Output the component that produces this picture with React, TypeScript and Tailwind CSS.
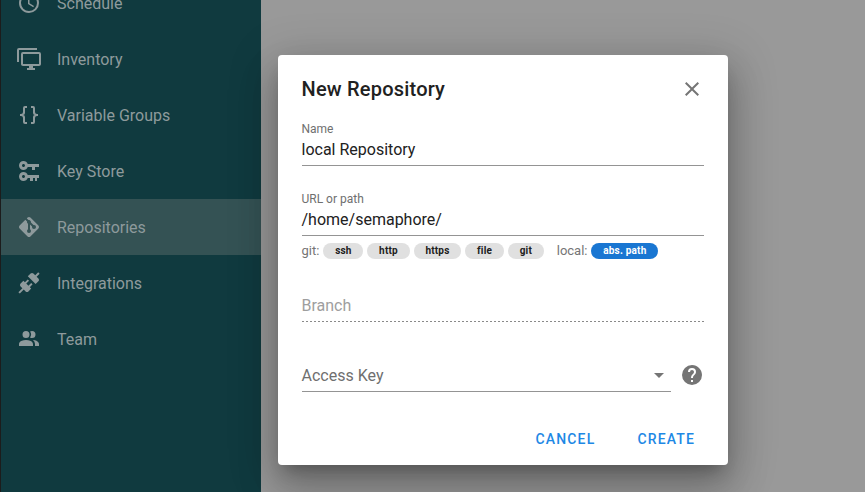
import React from "react";

const icons = {
  clock: "M12,20A8,8 0 0,0 20,12A8,8 0 0,0 12,4A8,8 0 0,0 4,12A8,8 0 0,0 12,20M12,2A10,10 0 0,1 22,12A10,10 0 0,1 12,22C6.47,22 2,17.5 2,12A10,10 0 0,1 12,2M12.5,7V12.25L17,14.92L16.25,16.15L11,13V7H12.5Z",
  monitor: "M22,17V7H6V17H22M22,5A2,2 0 0,1 24,7V17C24,18.11 23.1,19 22,19H16V21H18V23H10V21H12V19H6C4.89,19 4,18.11 4,17V7A2,2 0 0,1 6,5H22M2,3V15H0V3A2,2 0 0,1 2,1H20V3H2Z",
  braces: "M8,3A2,2 0 0,0 6,5V9A2,2 0 0,1 4,11H3V13H4A2,2 0 0,1 6,15V19A2,2 0 0,0 8,21H10V19H8V14A2,2 0 0,0 6,12A2,2 0 0,0 8,10V5H10V3M16,3A2,2 0 0,1 18,5V9A2,2 0 0,0 20,11H21V13H20A2,2 0 0,0 18,15V19A2,2 0 0,1 16,21H14V19H16V14A2,2 0 0,1 18,12A2,2 0 0,1 16,10V5H14V3H16Z",
  keys: "M6.5 2C8.46 2 10.13 3.25 10.74 5H22V8H18V11H15V8H10.74C10.13 9.75 8.46 11 6.5 11C4 11 2 9 2 6.5C2 4 4 2 6.5 2M6.5 5C5.67 5 5 5.67 5 6.5C5 7.33 5.67 8 6.5 8C7.33 8 8 7.33 8 6.5C8 5.67 7.33 5 6.5 5M6.5 13C8.46 13 10.13 14.25 10.74 16H22V19H20V22H18V19H16V22H13V19H10.74C10.13 20.75 8.46 22 6.5 22C4 22 2 20 2 17.5C2 15 4 13 6.5 13M6.5 16C5.67 16 5 16.67 5 17.5C5 18.33 5.67 19 6.5 19C7.33 19 8 18.33 8 17.5C8 16.67 7.33 16 6.5 16Z",
  git: "M2.6,10.59L8.38,4.8L10.07,6.5C9.83,7.35 10.22,8.28 11,8.73V14.27C10.4,14.61 10,15.26 10,16A2,2 0 0,0 12,18A2,2 0 0,0 14,16C14,15.26 13.6,14.61 13,14.27V9.41L15.07,11.5C15,11.65 15,11.82 15,12A2,2 0 0,0 17,14A2,2 0 0,0 19,12A2,2 0 0,0 17,10C16.82,10 16.65,10 16.5,10.07L13.93,7.5C14.19,6.57 13.71,5.55 12.78,5.16C12.35,5 11.9,4.96 11.5,5.07L9.8,3.38L10.59,2.6C11.37,1.81 12.63,1.81 13.41,2.6L21.4,10.59C22.19,11.37 22.19,12.63 21.4,13.41L13.41,21.4C12.63,22.19 11.37,22.19 10.59,21.4L2.6,13.41C1.81,12.63 1.81,11.37 2.6,10.59Z",
  plug: "M21.4 7.5C22.2 8.3 22.2 9.6 21.4 10.3L18.6 13.1L10.8 5.3L13.6 2.5C14.4 1.7 15.7 1.7 16.4 2.5L18.2 4.3L21.2 1.3L22.6 2.7L19.6 5.7L21.4 7.5M15.6 13.3L14.2 11.9L11.4 14.7L9.3 12.6L12.1 9.8L10.7 8.4L7.9 11.2L6.4 9.8L3.6 12.6C2.8 13.4 2.8 14.7 3.6 15.4L5.4 17.2L1.4 21.2L2.8 22.6L6.8 18.6L8.6 20.4C9.4 21.2 10.7 21.2 11.4 20.4L14.2 17.6L12.8 16.2L15.6 13.3Z",
  team: "M16 17V19H2V17S2 13 9 13 16 17 16 17M12.5 7.5A3.5 3.5 0 1 0 9 11A3.5 3.5 0 0 0 12.5 7.5M15.94 13A5.32 5.32 0 0 1 18 17V19H22V17S22 13.37 15.94 13M15 4A3.39 3.39 0 0 0 13.07 4.59A5 5 0 0 1 13.07 10.41A3.39 3.39 0 0 0 15 11A3.5 3.5 0 0 0 15 4Z",
  close: "M19,6.41L17.59,5L12,10.59L6.41,5L5,6.41L10.59,12L5,17.59L6.41,19L12,13.41L17.59,19L19,17.59L13.41,12L19,6.41Z",
  help: "M15.07,11.25L14.17,12.17C13.45,12.89 13,13.5 13,15H11V14.5C11,13.39 11.45,12.39 12.17,11.67L13.41,10.41C13.78,10.05 14,9.55 14,9C14,7.89 13.1,7 12,7A2,2 0 0,0 10,9H8A4,4 0 0,1 12,5A4,4 0 0,1 16,9C16,9.88 15.64,10.67 15.07,11.25M13,19H11V17H13M12,2A10,10 0 0,0 2,12A10,10 0 0,0 12,22A10,10 0 0,0 22,12C22,6.47 17.5,2 12,2Z",
  caret: "M7,10L12,15L17,10H7Z",
};

const navItems = [
  { label: "Schedule", icon: icons.clock },
  { label: "Inventory", icon: icons.monitor },
  { label: "Variable Groups", icon: icons.braces },
  { label: "Key Store", icon: icons.keys },
  { label: "Repositories", icon: icons.git, active: true },
  { label: "Integrations", icon: icons.plug },
  { label: "Team", icon: icons.team },
];

function Icon({ d, className }: { d: string; className?: string }) {
  return (
    <svg viewBox="0 0 24 24" className={className} fill="currentColor">
      <path d={d} />
    </svg>
  );
}

function Chip({ label, active }: { label: string; active?: boolean }) {
  return (
    <span
      className={`h-4 px-[11.75px] rounded-full flex items-center text-[10px] font-bold tracking-[0.2px] ${
        active ? "bg-[#1976d2] text-white" : "bg-[#e0e0e0] text-[#212121]"
      }`}
    >
      {label}
    </span>
  );
}

export default function App() {
  return (
    <div className="relative h-[492px] w-[865px] overflow-hidden flex bg-[#999999] font-['Roboto',sans-serif]">
      {/* Sidebar */}
      <div className="w-[261px] h-full bg-[#103a3f] border-l border-[#1c1c1c] overflow-hidden">
        <div className="-mt-[25px]">
          {navItems.map((item) => (
            <div
              key={item.label}
              className={`h-[56px] flex items-center pl-4 text-[#8e9a9c] ${item.active ? "bg-[#345254]" : ""}`}
            >
              <Icon d={item.icon} className="w-6 h-6 shrink-0" />
              <span className="ml-4 pt-[2px] text-base">{item.label}</span>
            </div>
          ))}
        </div>
      </div>

      {/* Dialog */}
      <div className="absolute left-[277.5px] top-[55px] w-[450px] h-[410px] bg-white rounded shadow-[0_11px_15px_-7px_rgba(0,0,0,0.25),0_24px_38px_3px_rgba(0,0,0,0.18),0_9px_46px_8px_rgba(0,0,0,0.16)] flex flex-col">
        <div className="h-[68px] px-6 flex items-center justify-between">
          <span className="text-xl font-medium text-[#212121] tracking-[0.2px]">New Repository</span>
          <Icon d={icons.close} className="w-6 h-6 text-[#757575]" />
        </div>

        <div className="px-6 flex flex-col">
          <div className="h-[43px] border-b border-[#949494]">
            <div className="text-xs leading-[12px] text-[#6f6f6f]">Name</div>
            <div className="text-base leading-5 mt-[5px] text-[#212121]">local Repository</div>
          </div>

          <div className="mt-[27px] h-[43px] border-b border-[#949494]">
            <div className="text-xs leading-[12px] text-[#6f6f6f]">URL or path</div>
            <div className="text-base leading-5 mt-[5px] text-[#212121]">/home/semaphore/</div>
          </div>

          <div className="mt-[7px] flex items-center text-[13px] leading-4 text-[#757575]">
            <span className="mr-[4px]">git:</span>
            <div className="flex gap-[4px]">
              <Chip label="ssh" />
              <Chip label="http" />
              <Chip label="https" />
              <Chip label="file" />
              <Chip label="git" />
            </div>
            <span className="ml-[13px] mr-[4px]">local:</span>
            <Chip label="abs. path" active />
          </div>

          {/* disabled field: dashed line as in the Vuetify input */}
          <div className="mt-[37px] h-[26px] border-b border-solid [border-image:repeating-linear-gradient(to_right,#8a8a8a_0,#8a8a8a_2px,transparent_2px,transparent_4px)_1_repeat] text-base leading-5 text-[#9e9e9e]">
            Branch
          </div>

          <div className="mt-[44px] flex items-start">
            <div className="flex-1 h-[26px] border-b border-[#949494] flex justify-between text-base leading-5 text-[#6f6f6f]">
              <span>Access Key</span>
              <Icon d={icons.caret} className="w-6 h-6 text-[#757575] -mt-[3px]" />
            </div>
            <Icon d={icons.help} className="w-6 h-6 ml-[9px] -mt-[3px] text-[#757575]" />
          </div>
        </div>

        <div className="mt-[37px] pr-[32.5px] flex justify-end gap-[42px] text-sm font-medium tracking-[1.15px] text-[#1e88e5]">
          <span>CANCEL</span>
          <span>CREATE</span>
        </div>
      </div>
    </div>
  );
}
